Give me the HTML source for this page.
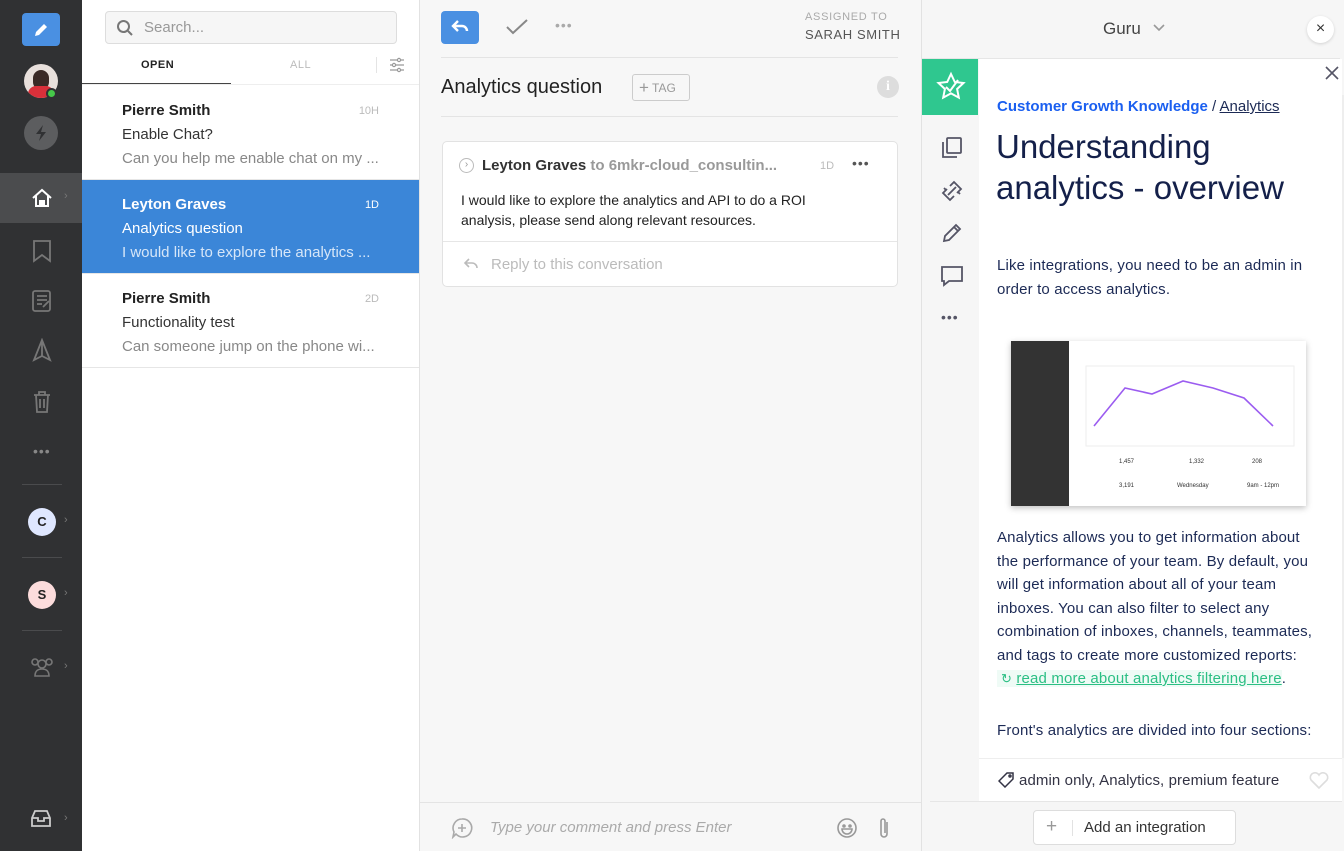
<!DOCTYPE html>
<html><head><meta charset="utf-8"><style>
*{box-sizing:border-box;margin:0;padding:0}
body{width:1344px;height:851px;overflow:hidden;font-family:"Liberation Sans",sans-serif;position:relative;background:#fff}
.abs{position:absolute}
#nav{left:0;top:0;width:82px;height:851px;background:#303133}
#list{left:82px;top:0;width:338px;height:851px;background:#fff;border-right:1px solid #e2e2e2}
#mid{left:420px;top:0;width:502px;height:851px;background:#f7f7f7;border-right:1px solid #e2e2e2}
#right{left:922px;top:0;width:422px;height:851px;background:#f6f6f6}
.item{position:absolute;left:0;width:337px;height:94px;border-bottom:1px solid #e6e6e6}
.item .n{position:absolute;left:40px;top:16px;font-size:15px;font-weight:bold;color:#222}
.item .t{position:absolute;right:40px;top:19px;font-size:11px;color:#bbb}
.item .s{position:absolute;left:40px;top:40px;font-size:15px;color:#333}
.item .p{position:absolute;left:40px;top:64px;font-size:15px;color:#888}
.sel{background:#3b86d8}
.sel .n,.sel .t,.sel .s{color:#fff}.sel .p{color:#d6e6f8}
.ico{position:absolute}
.art{font-size:15px;color:#1c2a55;line-height:23.5px;letter-spacing:.15px}
</style></head><body>
<div id="nav" class="abs">
 <div class="abs" style="left:22px;top:13px;width:38px;height:33px;background:#4a90e2;border-radius:4px"></div>
 <svg class="ico" style="left:31px;top:20px" width="20" height="20" viewBox="0 0 20 20"><path d="M4 16l1-4 8-8 3 3-8 8z" fill="#fff"/></svg>
 <div class="abs" style="left:24px;top:64px;width:34px;height:34px;border-radius:50%;background:#e8e0dc;overflow:hidden"><div style="position:absolute;left:9px;top:6px;width:16px;height:20px;border-radius:8px;background:#3a2a26"></div><div style="position:absolute;left:4px;top:22px;width:26px;height:14px;border-radius:8px 8px 0 0;background:#d9303a"></div></div>
 <div class="abs" style="left:46px;top:88px;width:11px;height:11px;border-radius:50%;background:#46c84a;border:2px solid #303133"></div>
 <div class="abs" style="left:24px;top:116px;width:34px;height:34px;border-radius:50%;background:#5c5d5f"></div>
 <svg class="ico" style="left:31px;top:123px" width="20" height="20" viewBox="0 0 20 20"><path d="M12 2L5 11h5l-2 7 7-9h-5z" fill="#303133"/></svg>
 <div class="abs" style="left:0;top:173px;width:82px;height:50px;background:#4b4c4e"></div>
 <svg class="ico" style="left:30px;top:186px" width="24" height="24" viewBox="0 0 24 24" fill="none" stroke="#fff" stroke-width="2"><path d="M3 12L12 4l9 8M6 10v10h12V10"/><path d="M10 20v-5h4v5" fill="#fff"/></svg>
 <div class="abs" style="left:64px;top:190px;color:#777;font-size:11px">›</div>
 <svg class="ico" style="left:31px;top:239px" width="22" height="24" viewBox="0 0 22 24" fill="none" stroke="#777" stroke-width="1.8"><path d="M3 2h16v20l-8-6-8 6z"/></svg>
 <svg class="ico" style="left:31px;top:289px" width="22" height="24" viewBox="0 0 22 24" fill="none" stroke="#777" stroke-width="1.8"><rect x="2" y="2" width="17" height="20" rx="2"/><path d="M6 7h10M6 11h10M6 15h5M12 18l6-6"/></svg>
 <svg class="ico" style="left:31px;top:338px" width="22" height="26" viewBox="0 0 22 26" fill="none" stroke="#777" stroke-width="1.8"><path d="M11 2L3 22l8-4 8 4zM11 2v16"/></svg>
 <svg class="ico" style="left:32px;top:390px" width="20" height="24" viewBox="0 0 20 24" fill="none" stroke="#777" stroke-width="1.8"><path d="M2 5h16M7 5V2h6v3M4 5l1 17h10l1-17M8 9v9M12 9v9"/></svg>
 <div class="abs" style="left:33px;top:443px;color:#888;font-size:14px;letter-spacing:1px">•••</div>
 <div class="abs" style="left:22px;top:484px;width:40px;height:1px;background:#4a4b4d"></div>
 <div class="abs" style="left:28px;top:508px;width:28px;height:28px;border-radius:50%;background:#dfe7ff;color:#222;font-size:13px;font-weight:bold;text-align:center;line-height:28px">C</div>
 <div class="abs" style="left:64px;top:514px;color:#777;font-size:11px">›</div>
 <div class="abs" style="left:22px;top:557px;width:40px;height:1px;background:#4a4b4d"></div>
 <div class="abs" style="left:28px;top:581px;width:28px;height:28px;border-radius:50%;background:#fcdcdc;color:#222;font-size:13px;font-weight:bold;text-align:center;line-height:28px">S</div>
 <div class="abs" style="left:64px;top:587px;color:#777;font-size:11px">›</div>
 <div class="abs" style="left:22px;top:630px;width:40px;height:1px;background:#4a4b4d"></div>
 <svg class="ico" style="left:30px;top:656px" width="24" height="22" viewBox="0 0 24 22" fill="none" stroke="#777" stroke-width="1.6"><circle cx="12" cy="8" r="4"/><path d="M5 20c0-5 3-7 7-7s7 2 7 7z"/><circle cx="5" cy="6" r="3"/><circle cx="19" cy="6" r="3"/></svg>
 <div class="abs" style="left:64px;top:660px;color:#777;font-size:11px">›</div>
 <svg class="ico" style="left:29px;top:809px" width="24" height="20" viewBox="0 0 24 20" fill="none" stroke="#ccc" stroke-width="1.8"><path d="M3 9l3-7h12l3 7v8H3zM3 9h6v3h6V9h6"/></svg>
 <div class="abs" style="left:64px;top:812px;color:#777;font-size:11px">›</div>
</div>

<div id="list" class="abs">
 <div class="abs" style="left:23px;top:11px;width:292px;height:33px;border:1px solid #ddd;border-radius:4px;background:#f6f6f6"></div>
 <svg class="ico" style="left:34px;top:19px" width="18" height="18" viewBox="0 0 18 18" fill="none" stroke="#777" stroke-width="2"><circle cx="7.5" cy="7.5" r="5.5"/><path d="M12 12l4 4"/></svg>
 <div class="abs" style="left:62px;top:19px;font-size:15px;color:#999">Search...</div>
 <div class="abs" style="left:59px;top:59px;font-size:11px;font-weight:bold;color:#222;letter-spacing:.5px">OPEN</div>
 <div class="abs" style="left:208px;top:59px;font-size:11px;color:#bbb;letter-spacing:.5px">ALL</div>
 <div class="abs" style="left:294px;top:57px;width:1px;height:16px;background:#e4e4e4"></div>
 <svg class="ico" style="left:307px;top:57px" width="16" height="16" viewBox="0 0 16 16" fill="none" stroke="#999" stroke-width="1.2"><path d="M1 3h14M1 8h14M1 13h14"/><circle cx="10" cy="3" r="1.6" fill="#fff"/><circle cx="5" cy="8" r="1.6" fill="#fff"/><circle cx="10" cy="13" r="1.6" fill="#fff"/></svg>
 <div class="abs" style="left:0;top:83px;width:149px;height:2px;background:#444"></div>
 <div class="abs" style="left:0;top:84px;width:337px;height:1px;background:#eee"></div>
 <div class="item" style="top:86px"><div class="n">Pierre Smith</div><div class="t">10H</div><div class="s">Enable Chat?</div><div class="p">Can you help me enable chat on my ...</div></div>
 <div class="item sel" style="top:180px"><div class="n">Leyton Graves</div><div class="t">1D</div><div class="s">Analytics question</div><div class="p">I would like to explore the analytics ...</div></div>
 <div class="item" style="top:274px"><div class="n">Pierre Smith</div><div class="t">2D</div><div class="s">Functionality test</div><div class="p">Can someone jump on the phone wi...</div></div>
</div>

<div id="mid" class="abs">
 <div class="abs" style="left:21px;top:11px;width:38px;height:33px;background:#4a90e2;border-radius:4px"></div>
 <svg class="ico" style="left:31px;top:18px" width="18" height="18" viewBox="0 0 18 18" fill="none" stroke="#fff" stroke-width="2.4"><path d="M7 3L2 8l5 5M2 8h9a5 5 0 0 1 5 5"/></svg>
 <svg class="ico" style="left:85px;top:18px" width="24" height="18" viewBox="0 0 24 18" fill="none" stroke="#888" stroke-width="2"><path d="M2 9l6 6L22 2"/></svg>
 <div class="abs" style="left:135px;top:17px;font-size:14px;color:#aaa;letter-spacing:1px">•••</div>
 <div class="abs" style="left:385px;top:11px;font-size:11px;color:#aaa;letter-spacing:.7px">ASSIGNED TO</div>
 <div class="abs" style="left:385px;top:27px;font-size:13px;color:#555;letter-spacing:.6px">SARAH SMITH</div>
 <div class="abs" style="left:21px;top:57px;width:457px;height:1px;background:#e4e4e4"></div>
 <div class="abs" style="left:21px;top:76px;font-size:20px;color:#222">Analytics question</div>
 <div class="abs" style="left:212px;top:74px;width:58px;height:27px;border:1px solid #ccc;border-radius:3px;font-size:12px;color:#999;line-height:25px;padding-left:6px"><span style="font-size:17px;vertical-align:-1px">+</span> TAG</div>
 <div class="abs" style="left:457px;top:76px;width:22px;height:22px;border-radius:50%;background:#ddd;color:#fff;font-weight:bold;font-size:14px;text-align:center;line-height:22px;font-family:'Liberation Serif',serif">i</div>
 <div class="abs" style="left:21px;top:116px;width:457px;height:1px;background:#e4e4e4"></div>
 <div class="abs" style="left:22px;top:141px;width:456px;height:146px;background:#fff;border:1px solid #e2e2e2;border-radius:5px">
  <div class="abs" style="left:16px;top:16px;width:15px;height:15px;border:1px solid #bbb;border-radius:50%;font-size:10px;color:#999;text-align:center;line-height:12px">›</div>
  <div class="abs" style="left:39px;top:15px;font-size:15px;white-space:nowrap"><b style="color:#333">Leyton Graves</b> <span style="color:#999;font-weight:bold">to 6mkr-cloud_consultin...</span></div>
  <div class="abs" style="left:377px;top:18px;font-size:11px;color:#bbb">1D</div>
  <div class="abs" style="left:409px;top:13px;font-size:14px;color:#555;letter-spacing:1px">•••</div>
  <div class="abs" style="left:18px;top:48px;font-size:14px;color:#222;line-height:20px">I would like to explore the analytics and API to do a ROI<br>analysis, please send along relevant resources.</div>
  <div class="abs" style="left:0;top:99px;width:454px;height:1px;background:#e6e6e6"></div>
  <svg class="ico" style="left:20px;top:115px" width="16" height="14" viewBox="0 0 16 14" fill="none" stroke="#bbb" stroke-width="1.6"><path d="M6 2L2 6l4 4M2 6h7a5 5 0 0 1 5 5"/></svg>
  <div class="abs" style="left:48px;top:114px;font-size:15px;color:#bbb">Reply to this conversation</div>
 </div>
 <div class="abs" style="left:0;top:802px;width:501px;height:1px;background:#e4e4e4"></div>
 <svg class="ico" style="left:31px;top:817px" width="22" height="22" viewBox="0 0 22 22" fill="none" stroke="#aaa" stroke-width="1.6"><path d="M11 2a9 9 0 1 1-6 15l-3 3 1-5A9 9 0 0 1 11 2z"/><path d="M11 7v8M7 11h8"/></svg>
 <div class="abs" style="left:70px;top:819px;font-size:15px;color:#aaa;font-style:italic">Type your comment and press Enter</div>
 <svg class="ico" style="left:416px;top:817px" width="22" height="22" viewBox="0 0 22 22" fill="none" stroke="#999" stroke-width="1.6"><circle cx="11" cy="11" r="9"/><circle cx="8" cy="9" r="1" fill="#999"/><circle cx="14" cy="9" r="1" fill="#999"/><path d="M6 12h10a5 5 0 0 1-10 0z"/></svg>
 <svg class="ico" style="left:457px;top:816px" width="14" height="24" viewBox="0 0 14 24" fill="none" stroke="#999" stroke-width="1.6"><path d="M10 6v12a3 3 0 0 1-6 0V5a2 2 0 0 1 4 0v12"/></svg>
</div>

<div id="right" class="abs">
 <div class="abs" style="left:181px;top:19px;font-size:17px;color:#444">Guru</div>
 <svg class="ico" style="left:231px;top:24px" width="12" height="8" viewBox="0 0 12 8" fill="none" stroke="#999" stroke-width="1.6"><path d="M1 1l5 5 5-5"/></svg>
 <div class="abs" style="left:385px;top:16px;width:27px;height:27px;border-radius:50%;background:#fff;box-shadow:0 1px 3px rgba(0,0,0,.15);text-align:center;line-height:26px;font-size:16px;color:#333">×</div>
 <div class="abs" style="left:0;top:58px;width:418px;height:1px;background:#e6e6e6"></div>
 <div class="abs" style="left:0;top:59px;width:56px;height:56px;background:#2fc78f"></div>
 <svg class="ico" style="left:13px;top:71px" width="32" height="32" viewBox="0 0 32 32" fill="none" stroke="#fff" stroke-width="2"><path d="M16 3l3.8 8 8.7 1-6.4 6 1.7 8.6L16 22.4 8.2 26.6 9.9 18 3.5 12l8.7-1z"/><path d="M11 16l4 4 8-11"/></svg>
 <div class="abs" style="left:57px;top:59px;width:363px;height:699px;background:#fff"></div>
 <div class="abs" style="left:420px;top:95px;width:4px;height:663px;background:#eee"></div>
 <svg class="ico" style="left:19px;top:137px" width="22" height="22" viewBox="0 0 22 22" fill="none" stroke="#556" stroke-width="1.8"><rect x="6" y="1" width="14" height="15" rx="1"/><path d="M2 5v15h14"/></svg>
 <svg class="ico" style="left:19px;top:180px" width="22" height="22" viewBox="0 0 22 22" fill="none" stroke="#556" stroke-width="1.8"><path d="M9 6l4-4 7 7-4 4M13 16l-4 4-7-7 4-4M7 15l8-8M3 8l2 2M19 14l-2-2"/></svg>
 <svg class="ico" style="left:19px;top:222px" width="22" height="22" viewBox="0 0 22 22" fill="none" stroke="#556" stroke-width="1.8"><path d="M3 19l1-5L15 3l4 4L8 18zM13 5l4 4"/></svg>
 <svg class="ico" style="left:18px;top:264px" width="24" height="24" viewBox="0 0 24 24" fill="none" stroke="#556" stroke-width="1.8"><path d="M2 3h20v14H9l-5 4v-4H2z"/></svg>
 <div class="abs" style="left:19px;top:309px;font-size:14px;color:#556;letter-spacing:1px">•••</div>
 <svg class="ico" style="left:402px;top:65px" width="16" height="16" viewBox="0 0 16 16" fill="none" stroke="#556" stroke-width="1.6"><path d="M2 2l12 12M14 2L2 14"/></svg>
 <div class="abs" style="left:75px;top:98px;font-size:15px;color:#1a5ff0;font-weight:bold;white-space:nowrap">Customer Growth Knowledge <span style="color:#1c2a55;font-weight:normal">/ <u>Analytics</u></span></div>
 <div class="abs" style="left:74px;top:126px;font-size:33px;color:#14204a;line-height:41px">Understanding<br>analytics - overview</div>
 <div class="abs art" style="left:75px;top:254px">Like integrations, you need to be an admin in<br>order to access analytics.</div>
 <div class="abs" style="left:89px;top:341px;width:295px;height:165px;background:#fff;box-shadow:0 2px 6px rgba(0,0,0,.25)">
  <div class="abs" style="left:0;top:0;width:58px;height:165px;background:#333"></div>
  <svg class="abs" style="left:58px;top:0" width="237" height="165" viewBox="0 0 237 165"><rect x="17" y="25" width="208" height="80" fill="none" stroke="#eee"/><polyline points="25,85 56,47 83,53 114,40 144,47 175,57 204,85" fill="none" stroke="#9b5cf0" stroke-width="1.6"/><text x="50" y="122" font-size="6" fill="#333" font-family="Liberation Sans">1,457</text><text x="120" y="122" font-size="6" fill="#333" font-family="Liberation Sans">1,332</text><text x="183" y="122" font-size="6" fill="#333" font-family="Liberation Sans">208</text><text x="50" y="146" font-size="6" fill="#333" font-family="Liberation Sans">3,191</text><text x="108" y="146" font-size="6" fill="#333" font-family="Liberation Sans">Wednesday</text><text x="178" y="146" font-size="6" fill="#333" font-family="Liberation Sans">9am - 12pm</text></svg>
 </div>
 <div class="abs art" style="left:75px;top:526px">Analytics allows you to get information about<br>the performance of your team. By default, you<br>will get information about all of your team<br>inboxes. You can also filter to select any<br>combination of inboxes, channels, teammates,<br>and tags to create more customized reports:<br><span style="background:#effbf6;color:#2bbf84;padding:0 0 0 4px"><span style="font-size:13px">↻</span> <u>read more about analytics filtering here</u></span>.</div>
 <div class="abs art" style="left:75px;top:719px">Front's analytics are divided into four sections:</div>
 <div class="abs" style="left:57px;top:758px;width:363px;height:1px;background:#eee"></div>
 <div class="abs" style="left:57px;top:759px;width:363px;height:42px;background:#fff"></div>
 <svg class="ico" style="left:76px;top:772px" width="16" height="16" viewBox="0 0 16 16" fill="none" stroke="#334" stroke-width="1.5"><path d="M9 1h6v6l-8 8-6-6z"/><circle cx="12" cy="4" r="1"/></svg>
 <div class="abs" style="left:97px;top:772px;font-size:15px;color:#334;letter-spacing:.1px">admin only, Analytics, premium feature</div>
 <svg class="ico" style="left:386px;top:770px" width="22" height="20" viewBox="0 0 22 20" fill="none" stroke="#ddd" stroke-width="1.6"><path d="M11 18L3 10a4.5 4.5 0 0 1 8-5 4.5 4.5 0 0 1 8 5z"/></svg>
 <div class="abs" style="left:8px;top:801px;width:412px;height:1px;background:#e6e6e6"></div>
 <div class="abs" style="left:111px;top:810px;width:203px;height:35px;background:#fff;border:1px solid #ddd;border-radius:4px">
  <div class="abs" style="left:12px;top:5px;font-size:19px;color:#999">+</div>
  <div class="abs" style="left:38px;top:9px;width:1px;height:16px;background:#e2e2e2"></div>
  <div class="abs" style="left:50px;top:8px;font-size:15px;color:#333">Add an integration</div>
 </div>
</div>
</body></html>
